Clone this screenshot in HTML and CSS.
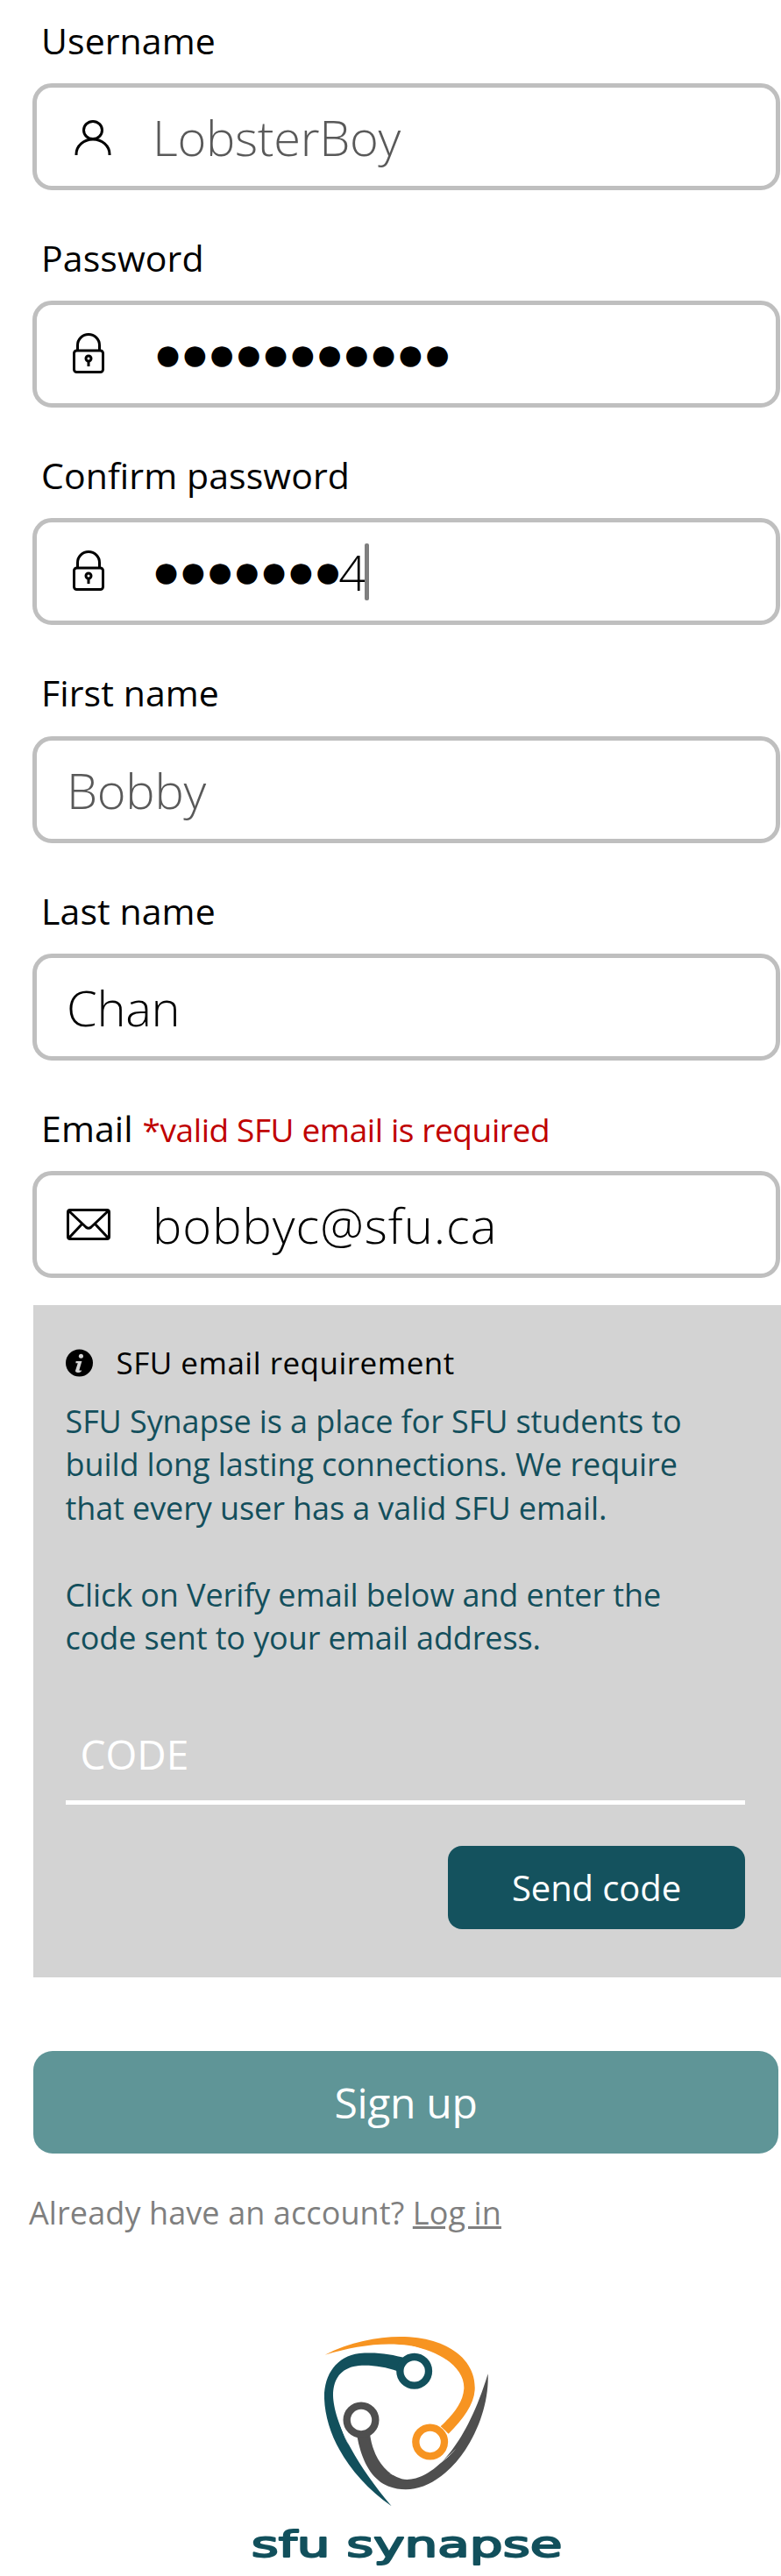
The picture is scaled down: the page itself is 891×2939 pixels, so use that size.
FILE: index.html
```html
<!DOCTYPE html>
<html lang="en">
<head>
<meta charset="utf-8">
<title>Sign up</title>
<link rel="stylesheet" href="styles.css">
</head>
<body>
<main class="page">
  <section class="field field-first">
    <div class="label">Username</div>
    <div class="box">
      <svg class="icon icon-user" viewBox="0 0 42 42"><ellipse cx="21" cy="12.500" rx="10.500" ry="10"/><path d="M2 41v-1a19 17 0 0 1 38 0v1"/></svg>
      <span class="value hint">LobsterBoy</span>
    </div>
  </section>
  <section class="field">
    <div class="label">Password</div>
    <div class="box">
      <svg class="icon icon-lock" viewBox="0 0 36 46"><rect x="1.500" y="20" width="33" height="24.500" rx="3"/><path d="M5.500 20v-6a12.500 12.500 0 0 1 25 0v6"/><circle cx="18" cy="29" r="3"/><path d="M18 32v6"/></svg>
      <span class="value dots">●●●●●●●●●●●</span>
    </div>
  </section>
  <section class="field">
    <div class="label">Confirm password</div>
    <div class="box">
      <svg class="icon icon-lock" viewBox="0 0 36 46"><rect x="1.500" y="20" width="33" height="24.500" rx="3"/><path d="M5.500 20v-6a12.500 12.500 0 0 1 25 0v6"/><circle cx="18" cy="29" r="3"/><path d="M18 32v6"/></svg>
      <span class="value dots dots-short">●●●●●●●</span><span class="value four">4</span><span class="caret"></span>
    </div>
  </section>
  <section class="field">
    <div class="label">First name</div>
    <div class="box box-plain"><span class="value hint">Bobby</span></div>
  </section>
  <section class="field">
    <div class="label">Last name</div>
    <div class="box box-plain"><span class="value">Chan</span></div>
  </section>
  <section class="field">
    <div class="label">Email <span class="required">*valid SFU email is required</span></div>
    <div class="box">
      <svg class="icon icon-mail" viewBox="0 0 50 36"><rect x="1.500" y="1.500" width="47" height="33" rx="2.500"/><path d="M3 3l19 18q3 2.500 6 0L47 3M3 33l15-16M47 33L32 17"/></svg>
      <span class="value value-wide">bobbyc@sfu.ca</span>
    </div>
  </section>

  <section class="notice">
    <div class="notice-title">
      <svg class="icon-info" viewBox="0 0 32 32"><circle cx="16" cy="16" r="16"/><circle cx="18" cy="8" r="2.600" class="info-mark"/><path class="info-mark" d="M12 14h7l-3 10q-.3 1.500 2.500.6l-.3 1.600q-6 2.800-7-.6l3-9.400h-2.500z"/></svg>
      <span>SFU email requirement</span>
    </div>
    <p class="notice-text">SFU Synapse is a place for SFU students to<br>build long lasting connections. We require<br>that every user has a valid SFU email.</p>
    <p class="notice-text notice-text-second">Click on Verify email below and enter the<br>code sent to your email address.</p>
    <div class="code">CODE</div>
    <div class="notice-actions"><button class="send" type="button">Send code</button></div>
  </section>

  <button class="signup" type="button">Sign up</button>
  <p class="login">Already have an account? <a href="#login">Log in</a></p>

  <svg class="logo" viewBox="0 0 1260 897" role="img" aria-label="SFU Synapse logo">
    <path class="fill-orange" d="M362 140C470 85 590 70 680 82C790 96 880 160 875 260C872 310 835 360 785 410L758 385C800 345 835 305 838 255C840 190 770 130 650 108C560 95 460 110 362 140Z"/>
    <circle class="ring ring-orange" cx="722" cy="438" r="49"/>
    <path class="fill-teal" d="M640 152L610 196C560 178 500 172 460 180C410 192 390 230 390 280C392 350 440 480 590 658C450 560 365 420 360 290C358 210 400 145 480 135C540 130 590 138 640 152Z"/>
    <circle class="ring ring-teal" cx="668" cy="196" r="49"/>
    <path class="fill-gray" d="M472 418L516 410C525 480 560 545 625 565C700 580 830 500 920 205C925 330 860 480 760 555C700 600 640 612 580 590C515 565 485 490 472 418Z"/>
    <circle class="ring ring-gray" cx="486" cy="363" r="49"/>
    <path class="sliver" d="M650 108C740 125 810 175 832 262C800 180 740 135 650 108ZM466 192C420 210 395 260 402 320C410 370 425 420 445 450C415 390 395 320 405 265C415 225 435 205 466 192ZM580 545C650 575 745 540 812 460C750 525 670 570 580 545Z"/>
    <text class="wordmark" x="110" y="830" textLength="1064" lengthAdjust="spacingAndGlyphs">sfu synapse</text>
  </svg>
</main>
</body>
</html>
```

FILE: styles.css
```css
* { box-sizing: border-box; }

html, body {
  margin: 0;
  padding: 0;
  background: #fff;
}

body {
  width: 891px;
  height: 2939px;
  overflow: hidden;
  font-family: "Open Sans", "Noto Sans", sans-serif;
  color: #000;
}

.page {
  padding: 0 0 0 37px;
}

.field {
  height: 248.2px;
  display: flex;
  flex-direction: column;
}

.field-first {
  margin-top: -31.200px;
}

.label {
  height: 127.200px;
  padding: 50px 0 0 10px;
  font-size: 41px;
  line-height: 54px;
  letter-spacing: 0.1px;
  white-space: pre;
}

.required {
  font-size: 37px;
  color: #c00000;
  letter-spacing: -0.400px;
}

.box {
  width: 853px;
  height: 122px;
  flex: none;
  border: 5px solid #bfbfbf;
  border-radius: 22px;
  background: #fff;
  display: flex;
  align-items: center;
  padding-left: 132px;
  position: relative;
}

.box-plain {
  padding-left: 34px;
}

.icon {
  position: absolute;
  fill: none;
  stroke: #000;
  stroke-width: 3;
}

.icon-user {
  left: 43px;
  top: 36px;
  width: 42px;
  height: 42px;
}

.icon-lock {
  left: 41px;
  top: 32px;
  width: 36px;
  height: 46px;
}

.icon-mail {
  left: 34px;
  top: 38px;
  width: 50px;
  height: 36px;
}

.value {
  font-size: 56px;
  font-weight: 300;
  line-height: 76px;
  letter-spacing: -0.300px;
  white-space: nowrap;
}

.value-wide {
  letter-spacing: 1px;
}

.hint {
  color: #595959;
}

.dots {
  font-family: "DejaVu Sans", sans-serif;
  font-size: 31px;
  font-weight: 400;
  letter-spacing: 3.700px;
  padding-left: 4px;
}

.dots-short {
  padding-left: 2px;
}

.four {
  margin-left: -5px;
}

.caret {
  width: 5px;
  height: 65px;
  margin-left: -2px;
  background: #7f7f7f;
  border-radius: 2px;
}

.notice {
  margin: 31px 0 0 1px;
  width: 853px;
  height: 767px;
  padding: 46px 41px 0 36.500px;
  background: #d3d3d3;
  color: #134f5c;
}

.notice-title {
  display: flex;
  align-items: center;
  gap: 27px;
  font-size: 35px;
  line-height: 40px;
  color: #000;
  letter-spacing: 0.500px;
}

.icon-info {
  width: 31px;
  height: 32px;
  fill: #000;
}

.info-mark {
  fill: #d3d3d3;
}

.notice-text {
  margin: 22px 0 0;
  font-size: 36px;
  line-height: 49.400px;
  letter-spacing: -0.100px;
  white-space: nowrap;
}

.notice-text-second {
  margin-top: 49.400px;
}

.code {
  margin-top: 76px;
  height: 90px;
  padding-left: 17px;
  border-bottom: 5px solid #fff;
  color: #fff;
  font-size: 46px;
  font-weight: 400;
  line-height: 64px;
}

.notice-actions {
  margin-top: 47px;
  display: flex;
  justify-content: flex-end;
}

.send {
  width: 339px;
  height: 95px;
  border: 0;
  border-radius: 16px;
  background: #14525e;
  color: #fff;
  font-family: inherit;
  font-size: 40px;
  line-height: 1;
  letter-spacing: -0.100px;
}

.signup {
  display: block;
  width: 850px;
  height: 117px;
  margin-top: 84px;
  margin-left: 1px;
  border: 0;
  border-radius: 22px;
  background: #5f9597;
  color: #fff;
  font-family: inherit;
  font-size: 48px;
  letter-spacing: -0.300px;
}

.login {
  margin: 44px 0 0 -4px;
  font-size: 36px;
  line-height: 48px;
  color: #7f7f7f;
  letter-spacing: 0.100px;
}

.login a {
  color: inherit;
}

.logo {
  display: block;
  width: 420px;
  height: 299px;
  margin: 91px 0 0 213px;
}

.fill-orange { fill: #f79421; }
.fill-teal { fill: #12505c; }
.fill-gray { fill: #4f4f4f; }

.ring {
  fill: #fff;
  stroke-width: 25;
}

.ring-orange { stroke: #f79421; }
.ring-teal { stroke: #12505c; }
.ring-gray { stroke: #4f4f4f; }

.sliver { fill: #fff; }

.wordmark {
  font-family: "DejaVu Sans", sans-serif;
  font-size: 124px;
  font-weight: 400;
  fill: #12505c;
  stroke: #12505c;
  stroke-width: 6;
  stroke-linejoin: round;
}
```
